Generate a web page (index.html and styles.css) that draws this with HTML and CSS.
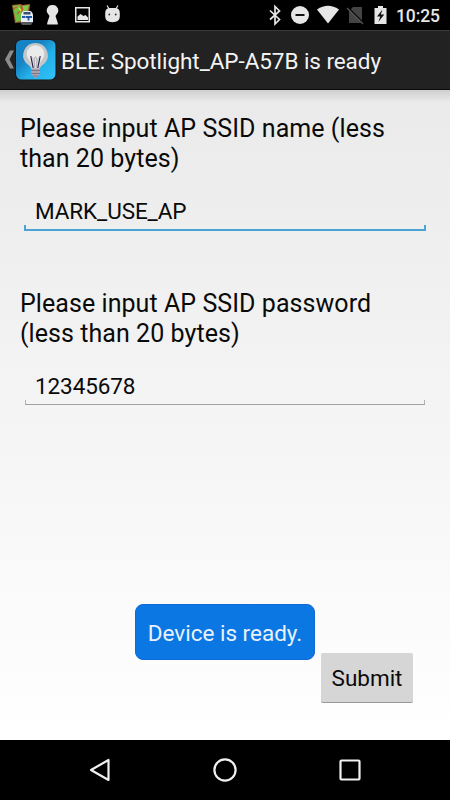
FILE: index.html
```
<!DOCTYPE html>
<html lang="en">
<head>
    <meta charset="UTF-8">
    <meta name="viewport" content="width=device-width, initial-scale=1.0">
    <title>Spotlight AP Setup</title>
    <link rel="stylesheet" href="styles.css">
</head>
<body>
    <div class="status-bar">
        <svg class="status-icons" width="125" height="30" viewBox="0 0 125 30">
            <!-- app notification -->
            <path d="M12 5l9-1 1 1 8-1-1 9-4 9-10 1z" fill="#a5662c"/>
            <path d="M13 6l7-1 3 15-7 2z" fill="#6fbf45"/>
            <path d="M22 6l7-1-2 7-4 1z" fill="#7ccb50"/>
            <path d="M13 9l4-2M21 5l2 5M17 14l3-3" stroke="#e0442c" stroke-width="1.1"/>
            <path d="M19 8l2 3" stroke="#f1d23c" stroke-width="1.5"/>
            <path d="M21 15q1-4 3-4h6q2 0 3 4v7h-12z" fill="#e8eef5"/>
            <rect x="23.500" y="12" width="7" height="2.500" fill="#3a5170"/>
            <path d="M22 17h3M29 17h3M25.500 17h3v3.500" fill="none" stroke="#2456a6" stroke-width="1.800"/>
            <path d="M20 22h13l-2 3h-9z" fill="#55585c"/>
            <!-- keyhole -->
            <path d="M52.500 5a5.500 5.500 0 0 1 4 9.500l-1 1.500 2.300 7v1.500h-10.600v-1.500l2.300-7-1-1.500a5.500 5.500 0 0 1 4-9.500z" fill="#e6e6e6"/>
            <!-- picture -->
            <rect x="75.750" y="7.750" width="13.500" height="14" fill="none" stroke="#e6e6e6" stroke-width="1.500"/>
            <path d="M77.500 20v-3.500l3-2.500 3 2 2-1 2.500 2.500v2.500z" fill="#e6e6e6"/>
            <!-- android head -->
            <path d="M107 5.500l2.500 4M118 5.500l-2.500 4" stroke="#e6e6e6" stroke-width="1.200"/>
            <path d="M105.200 13q0-5 5-5h4.600q5 0 5 5v3.500q0 5.700-7.300 5.700t-7.300-5.700z" fill="#e6e6e6"/>
            <circle cx="109.300" cy="14.500" r=".9" fill="#333"/>
            <circle cx="115.700" cy="14.500" r=".9" fill="#333"/>
        </svg>
        <svg class="status-icons" width="130" height="30" viewBox="265 0 130 30">
            <!-- bluetooth -->
            <path d="M270 10.500l9.500 9-4.500 4.500V6.500l4.500 4.500-9.500 8.500" fill="none" stroke="#e6e6e6" stroke-width="1.700"/>
            <!-- do not disturb -->
            <circle cx="300" cy="15" r="9" fill="#e6e6e6"/>
            <path d="M295.500 15h9" stroke="#111" stroke-width="2"/>
            <!-- wifi -->
            <path d="M317 9.500q11-7.500 22 0L328 23.500z" fill="#e6e6e6"/>
            <!-- no sim -->
            <path d="M353 7h9v16h-13V11z" fill="#444"/>
            <path d="M348 7.500l16 16" stroke="#000" stroke-width="1.500"/>
            <path d="M347 8l16 16" stroke="#555" stroke-width="1.300"/>
            <!-- charging -->
            <path d="M378 6h5v2h3.500v16h-12V8h3.500z" fill="#e6e6e6"/>
            <path d="M382.500 9.500l-5.500 7h3.300l-2 5.500 6-7.500h-3.500z" fill="#111"/>
        </svg>
        <span class="clock">10:25</span>
    </div>

    <div class="action-bar">
        <svg class="back-arrow" width="15" height="60" viewBox="0 0 15 60">
            <path d="M10 20.500h4L9.500 29.500l4.500 9h-4L5 29.500z" fill="#8b8b8b"/>
        </svg>
        <svg class="app-icon" width="42" height="42" viewBox="0 0 42 42">
            <defs>
                <linearGradient id="sky" x1="0" y1="0" x2="1" y2="1">
                    <stop offset="0.350" stop-color="#1583c4"/>
                    <stop offset="0.600" stop-color="#24afe8"/>
                    <stop offset="1" stop-color="#2fc4f8"/>
                </linearGradient>
            </defs>
            <rect x="0.300" y="0.300" width="41" height="41" rx="6" fill="#1b1210"/>
            <rect x="1" y="1" width="39.500" height="39.500" rx="5.500" fill="url(#sky)"/>
            <path d="M20.500 4a12.200 12.200 0 0 1 9.500 20q-4 2.500-5.500 6h-8q-1.500-3.500-5.500-6A12.200 12.200 0 0 1 20.500 4z" fill="#c4c7ca"/>
            <circle cx="20.500" cy="15" r="8.800" fill="#ebebeb"/>
            <path d="M14.500 20l3 9.500h6l3-9.500z" fill="#dedfe1"/>
            <path d="M15.800 17l2.400 12M25.200 17l-2.400 12" fill="none" stroke="#28203f" stroke-width="1.200"/>
            <path d="M16 17.500l3 3 1.500-3 1.500 3 3-3M19 20.500l.5 8M22 20.500l-.5 8" fill="none" stroke="#9894a4" stroke-width=".7"/>
            <path d="M16 29.500h9v6l-3 2-.7 1.500h-1.600l-.7-1.500-3-2z" fill="#aaa4b2"/>
            <path d="M16 31.500h9M16 34.500h9M18.500 37h4" stroke="#766f82" stroke-width=".9"/>
        </svg>
        <h1 class="title">BLE: Spotlight_AP-A57B is ready</h1>
    </div>

    <form class="content">
        <div class="field">
            <label for="ssid">Please input AP SSID name (less than 20 bytes)</label>
            <div class="input-wrap focused">
                <input type="text" id="ssid" name="ssid" value="MARK_USE_AP">
            </div>
        </div>
        <div class="field">
            <label for="password">Please input AP SSID password (less than 20 bytes)</label>
            <div class="input-wrap">
                <input type="text" id="password" name="password" value="12345678">
            </div>
        </div>
        <button class="submit-button" type="button">Submit</button>
    </form>

    <div class="toast">Device is ready.</div>

    <div class="nav-bar">
        <svg width="30" height="30" viewBox="0 0 30 30">
            <path d="M23.500 5v20L6 15z" fill="none" stroke="#f0f0f0" stroke-width="2.200" stroke-linejoin="round"/>
        </svg>
        <svg width="30" height="30" viewBox="0 0 30 30">
            <circle cx="15" cy="15" r="10.600" fill="none" stroke="#f0f0f0" stroke-width="2.200"/>
        </svg>
        <svg width="30" height="30" viewBox="0 0 30 30">
            <rect x="5.500" y="5.500" width="19" height="19" rx="1" fill="none" stroke="#f0f0f0" stroke-width="2.200"/>
        </svg>
    </div>
</body>
</html>
```
FILE: styles.css
```
* {
    box-sizing: border-box;
}

body {
    font-family: Roboto, "Liberation Sans", sans-serif;
    display: flex;
    flex-direction: column;
    height: 800px;
    margin: 0;
    overflow: hidden;
    position: relative;
    background: #000;
}

.status-bar {
    height: 30px;
    display: flex;
    background: #000;
}

.status-icons + .status-icons {
    margin-left: 140px;
}

.clock {
    margin-left: 1px;
    font-size: 17.5px;
    font-weight: 500;
    line-height: 32px;
    letter-spacing: -0.1px;
    color: #e6e6e6;
}

.action-bar {
    height: 60px;
    display: flex;
    align-items: center;
    background: #222;
    border-top: 1px solid #3a3a3a;
    border-bottom: 1px solid #0c0c0c;
}

.title {
    margin: 2px 0 0 4px;
    font-size: 22.5px;
    font-weight: 400;
    line-height: 30px;
    letter-spacing: -0.06px;
    white-space: nowrap;
    color: #f3f3f3;
}

.content {
    height: 650px;
    display: flex;
    flex-direction: column;
    padding: 24px 20px 0;
    background: linear-gradient(rgba(0, 0, 0, 0.12), rgba(0, 0, 0, 0) 12px),
        linear-gradient(#eaeaea, #fff);
}

.field {
    height: 175px;
}

.field label {
    display: block;
    padding-right: 20px;
    font-size: 25px;
    line-height: 29.5px;
    letter-spacing: 0.06px;
    color: #0a0a0a;
}

.input-wrap {
    position: relative;
    height: 39px;
    margin: 18px 5px 0;
    border-bottom: 1px solid #a2a2a2;
}

/* small ticks at both ends of the underline */
.input-wrap::before,
.input-wrap::after {
    content: "";
    position: absolute;
    bottom: 0;
    left: 0;
    width: 1px;
    height: 4px;
    background: #b0b0b0;
}

.input-wrap::after {
    left: auto;
    right: 0;
}

.input-wrap.focused {
    height: 40px;
    margin: 18px 4px 0;
    border-bottom: 2px solid #4ba3d3;
}

.input-wrap.focused::before,
.input-wrap.focused::after {
    width: 2px;
    background: #4ba3d3;
}

.input-wrap input {
    width: 100%;
    height: 38px;
    padding: 2px 10px 0;
    border: none;
    outline: none;
    background: transparent;
    font-family: inherit;
    font-size: 22.5px;
    letter-spacing: -0.1px;
    color: #0a0a0a;
}

.focused input {
    padding: 2px 11px 0;
}

.submit-button {
    align-self: flex-end;
    width: 92px;
    height: 50px;
    margin: 189px 17px 0 0;
    padding: 0;
    border: none;
    border-bottom: 1px solid #999;
    border-radius: 2px;
    background: #d6d6d6;
    font-family: inherit;
    font-size: 22.5px;
    color: #0a0a0a;
}

.toast {
    position: absolute;
    top: 604px;
    left: 135px;
    width: 180px;
    height: 56px;
    border: 1px solid #1269d8;
    border-radius: 8px;
    background: #0b77e3;
    font-size: 22.5px;
    line-height: 56px;
    text-align: center;
    color: #e9f2fc;
}

.nav-bar {
    height: 60px;
    display: flex;
    justify-content: center;
    align-items: center;
    gap: 95px;
    background: #000;
}
```
